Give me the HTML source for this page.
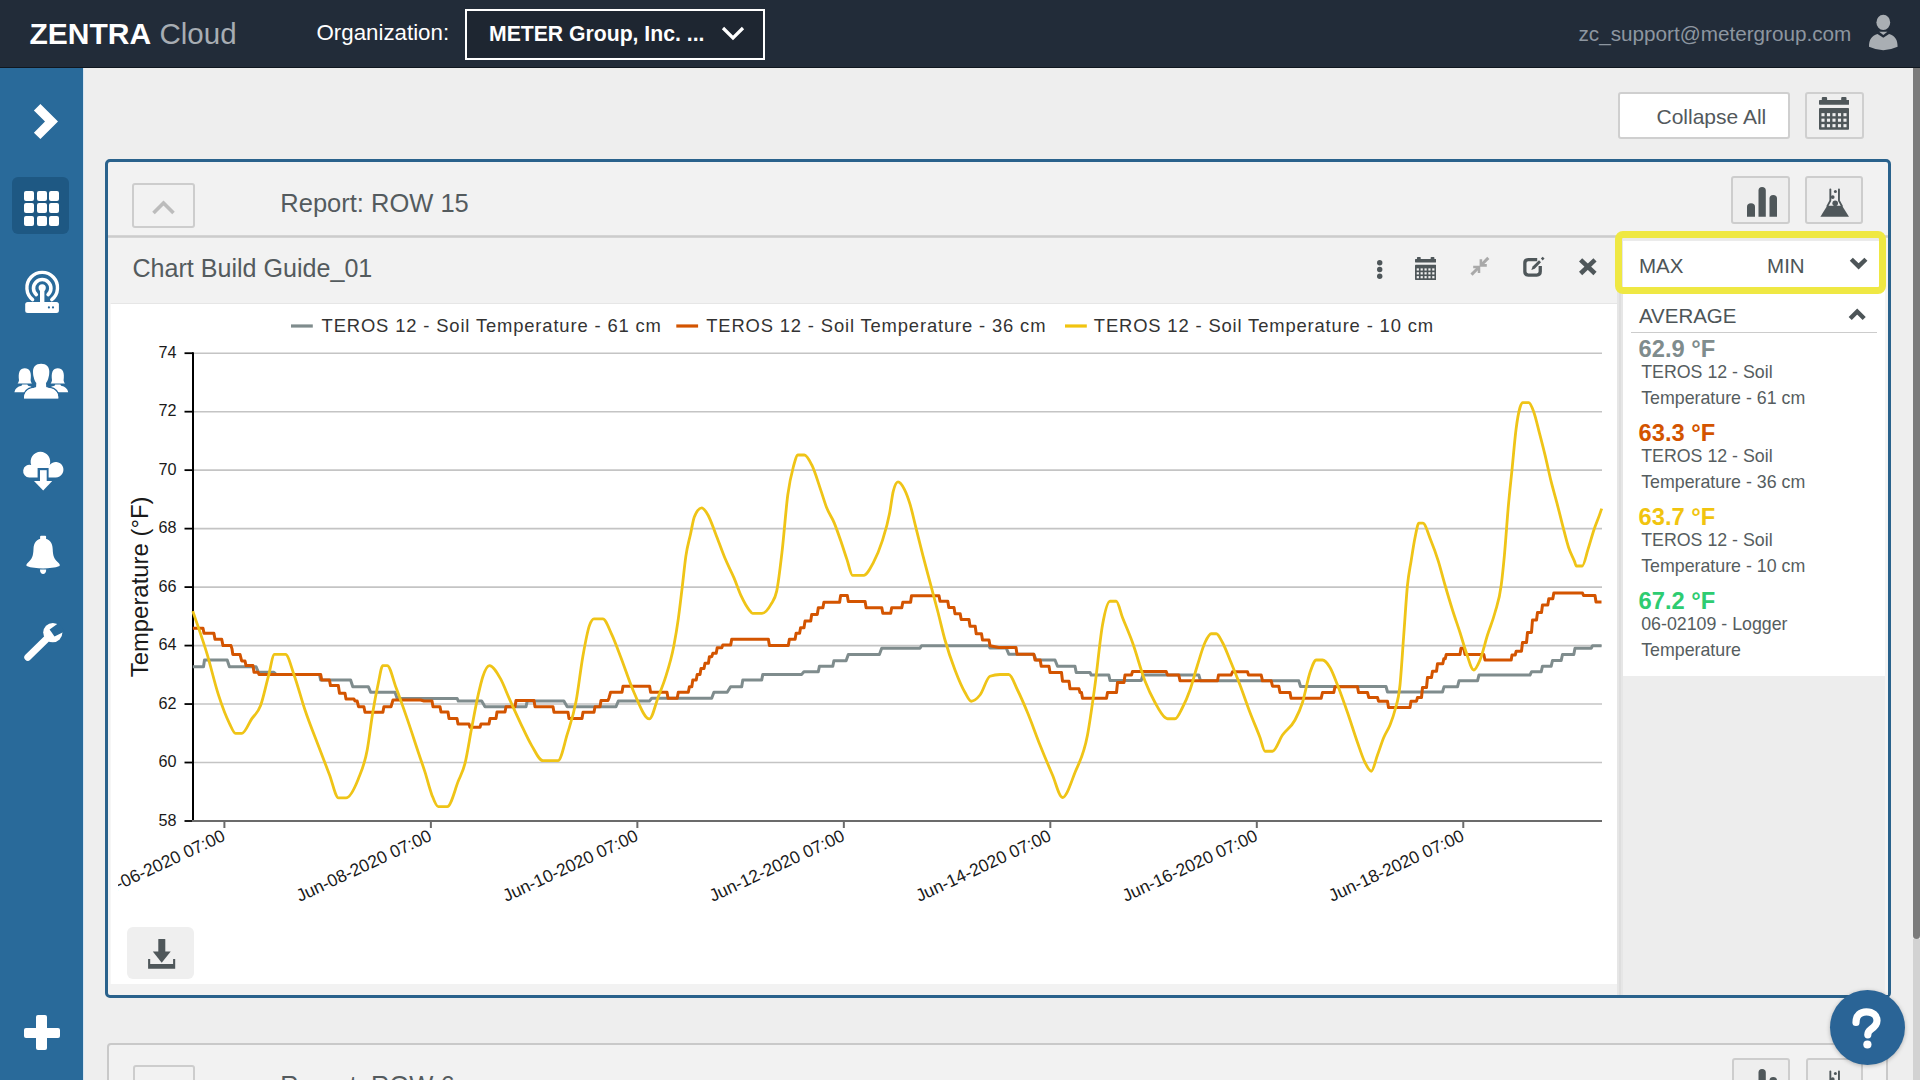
<!DOCTYPE html><html><head><meta charset="utf-8"><style>html,body{margin:0;padding:0;}body{width:1920px;height:1080px;overflow:hidden;position:relative;background:#eeeeee;font-family:"Liberation Sans",sans-serif;}</style></head><body><div style="position:absolute;left:0px;top:0px;width:1920px;height:67px;background:#222c39;"></div>
<div style="position:absolute;left:0px;top:67px;width:1920px;height:1px;background:#10171f;"></div>
<div style="position:absolute;left:29.50px;top:18.50px;font-size:30px;line-height:30px;color:#ffffff;font-weight:bold;white-space:nowrap;">ZENTRA</div>
<div style="position:absolute;left:159.50px;top:18.93px;font-size:29.5px;line-height:29.5px;color:#a7adb3;font-weight:normal;white-space:nowrap;">Cloud</div>
<div style="position:absolute;left:316.50px;top:22.12px;font-size:22.3px;line-height:22.3px;color:#ffffff;font-weight:normal;white-space:nowrap;">Organization:</div>
<div style="position:absolute;left:465px;top:9px;width:300px;height:51px;box-sizing:border-box;border:2px solid #ffffff;background:#1e2631;"></div>
<div style="position:absolute;left:489.00px;top:23.05px;font-size:21.2px;line-height:21.2px;color:#ffffff;font-weight:bold;white-space:nowrap;">METER Group, Inc. ...</div>
<svg style="position:absolute;left:720px;top:25px" width="26" height="17" viewBox="0 0 26 17"><polyline points="3,3 13,13 23,3" fill="none" stroke="#ffffff" stroke-width="3.2"/></svg>
<div style="position:absolute;left:1578.50px;top:24.38px;font-size:20.7px;line-height:20.7px;color:#8d96a0;font-weight:normal;white-space:nowrap;">zc_support@metergroup.com</div>
<svg style="position:absolute;left:1862px;top:10px" width="40" height="46" viewBox="1862 10 40 46"><ellipse cx="1883.3" cy="22.4" rx="6.9" ry="7.6" fill="#a9aeb3"/><path d="M1869,46.8 C1869,39.5 1871.5,36 1877.5,34 L1883.3,37.8 L1889.1,34 C1895.1,36 1897.6,39.5 1897.6,46.8 Q1883.3,53.5 1869,46.8 Z" fill="#a9aeb3"/><polygon points="1879.2,31.8 1887.4,31.8 1883.3,35" fill="#a9aeb3"/></svg>
<div style="position:absolute;left:0px;top:68px;width:83px;height:1012px;background:#296a9a;"></div>
<div style="position:absolute;left:83px;top:68px;width:1px;height:1012px;background:#d6e4f0;"></div>
<svg style="position:absolute;left:28px;top:100px" width="36" height="44" viewBox="28 100 36 44"><polygon points="33.9,110.5 40.4,104 58,121.5 40.4,139 33.9,132.7 45,121.6" fill="#fff"/></svg>
<div style="position:absolute;left:12px;top:177px;width:57px;height:57px;background:#1e5883;border-radius:6px;"></div>
<div style="position:absolute;left:24.0px;top:191.0px;width:10px;height:10px;background:#ffffff;border-radius:2px;"></div>
<div style="position:absolute;left:36.5px;top:191.0px;width:10px;height:10px;background:#ffffff;border-radius:2px;"></div>
<div style="position:absolute;left:49.0px;top:191.0px;width:10px;height:10px;background:#ffffff;border-radius:2px;"></div>
<div style="position:absolute;left:24.0px;top:203.3px;width:10px;height:10px;background:#ffffff;border-radius:2px;"></div>
<div style="position:absolute;left:36.5px;top:203.3px;width:10px;height:10px;background:#ffffff;border-radius:2px;"></div>
<div style="position:absolute;left:49.0px;top:203.3px;width:10px;height:10px;background:#ffffff;border-radius:2px;"></div>
<div style="position:absolute;left:24.0px;top:215.6px;width:10px;height:10px;background:#ffffff;border-radius:2px;"></div>
<div style="position:absolute;left:36.5px;top:215.6px;width:10px;height:10px;background:#ffffff;border-radius:2px;"></div>
<div style="position:absolute;left:49.0px;top:215.6px;width:10px;height:10px;background:#ffffff;border-radius:2px;"></div>
<svg style="position:absolute;left:0px;top:260px" width="84" height="60" viewBox="0 260 84 60"><path d="M32.6,299.6 A15.3,15.3 0 1 1 51.8,299.6" fill="none" stroke="#fff" stroke-width="3.4" stroke-linecap="round"/><path d="M36.3,294.6 A8.7,8.7 0 1 1 48.1,294.6" fill="none" stroke="#fff" stroke-width="3.6" stroke-linecap="round"/><circle cx="42.2" cy="287.8" r="3.6" fill="#fff"/><rect x="40" y="288" width="4.4" height="15" fill="#fff"/><rect x="25.2" y="301.9" width="33.7" height="11.1" rx="2.5" fill="#fff"/><circle cx="48.9" cy="307.4" r="1.1" fill="#2a6a9c"/><circle cx="53" cy="307.4" r="1.1" fill="#2a6a9c"/></svg>
<svg style="position:absolute;left:0px;top:355px" width="84" height="50" viewBox="0 355 84 50"><g transform="translate(0.0 0)"><path d="M19,380.2 C18.6,377 18.5,374 19.5,371.5 C20.5,369 22.5,368.2 24.8,368.2 C27.1,368.2 29.1,369 30.1,371.5 C31.1,374 31,377 30.6,380.2 C30.8,381.8 31.5,382.8 32,383.6 L17.6,383.6 C18.1,382.8 18.8,381.8 19,380.2 Z" fill="#fff"/><path d="M14.4,392.2 C15,388.6 17.5,386.6 21.5,385.8 L22.3,384.6 L27.3,384.6 L28.1,385.8 C32.1,386.6 34.6,388.6 35.2,392.2 Z" fill="#fff"/></g><g transform="translate(33.0 0)"><path d="M19,380.2 C18.6,377 18.5,374 19.5,371.5 C20.5,369 22.5,368.2 24.8,368.2 C27.1,368.2 29.1,369 30.1,371.5 C31.1,374 31,377 30.6,380.2 C30.8,381.8 31.5,382.8 32,383.6 L17.6,383.6 C18.1,382.8 18.8,381.8 19,380.2 Z" fill="#fff"/><path d="M14.4,392.2 C15,388.6 17.5,386.6 21.5,385.8 L22.3,384.6 L27.3,384.6 L28.1,385.8 C32.1,386.6 34.6,388.6 35.2,392.2 Z" fill="#fff"/></g><g fill="#fff" stroke="#2a6a9c" stroke-width="3.4" paint-order="stroke"><path d="M24,398.4 C24.3,392.2 27.5,389 33.5,388.1 L36.5,387.2 L46,387.2 L49,388.1 C55,389 58.3,392.2 58.3,398.4 Z"/></g><path d="M41.1,363.7 C46.5,363.7 49.3,367 49.3,371.5 C49.3,374 49,376 48.5,377.5 C48,380 47,382 46,383 L46.3,388.5 L36,388.5 L36.3,383 C35.3,382 34.3,380 33.8,377.5 C33.3,376 33,374 33,371.5 C33,367 35.7,363.7 41.1,363.7 Z" fill="#fff"/><path d="M24,398.2 C24.3,392.2 27.5,389 33.5,388.1 L36.5,387.2 L46,387.2 L49,388.1 C55,389 58.3,392.2 58.3,398.2 Z" fill="#fff"/></svg>
<svg style="position:absolute;left:0px;top:440px" width="84" height="60" viewBox="0 440 84 60"><path d="M29.3,477.4 A6.3,6.3 0 1 1 31.2,465.05 A9.8,9.8 0 1 1 49.6,465.05 A7.7,7.7 0 1 1 55.7,477.4 Z" fill="#fff"/><rect x="37.6" y="468" width="11" height="14" fill="#2a6a9c"/><rect x="40" y="470.2" width="6.7" height="12" fill="#fff"/><polygon points="34,481 52.2,481 43.2,490.4" fill="#fff"/></svg>
<svg style="position:absolute;left:0px;top:530px" width="84" height="50" viewBox="0 530 84 50"><rect x="40.1" y="535.8" width="6" height="4" rx="1" fill="#fff"/><path d="M43.1,538.6 C36.6,538.6 33.7,543 33.5,549 C33.3,555.5 32.1,559 28.6,562 C26.6,563.8 25.9,565 26.7,566 C31.1,567.8 37.1,568.4 43.1,568.4 C49.1,568.4 55.1,567.8 59.5,566 C60.3,565 59.6,563.8 57.6,562 C54.1,559 52.9,555.5 52.7,549 C52.5,543 49.6,538.6 43.1,538.6 Z" fill="#fff"/><path d="M40,569.6 H46.2 C46.2,572.6 45,574 43.1,574 C41.2,574 40,572.6 40,569.6 Z" fill="#fff"/></svg>
<svg style="position:absolute;left:0px;top:615px" width="84" height="55" viewBox="0 615 84 55"><line x1="27.8" y1="657.2" x2="47.5" y2="638" stroke="#fff" stroke-width="7" stroke-linecap="round"/><circle cx="52.8" cy="632.6" r="9.6" fill="#fff"/><polygon points="49.6,629.6 54.5,636.4 64.5,631.5 59,622.8" fill="#296a9a"/></svg>
<div style="position:absolute;left:23.5px;top:1027.5px;width:36px;height:10.4px;background:#fff;border-radius:2px;"></div>
<div style="position:absolute;left:36.4px;top:1015px;width:10.2px;height:35.2px;background:#fff;border-radius:2px;"></div>
<div style="position:absolute;left:1618px;top:92px;width:172px;height:47px;box-sizing:border-box;border:2px solid #cfcfcf;border-radius:3px;background:#ffffff;"></div>
<div style="position:absolute;left:1656.50px;top:106.02px;font-size:21px;line-height:21px;color:#53595c;font-weight:normal;white-space:nowrap;">Collapse All</div>
<div style="position:absolute;left:1805px;top:92px;width:59px;height:47px;box-sizing:border-box;border:2px solid #cfcfcf;border-radius:3px;background:#efefef;"></div>
<svg style="position:absolute;left:1818.6px;top:97px" width="30.2" height="32.7" viewBox="0 0 30.2 32.7" preserveAspectRatio="none"><rect x="2.8" y="0" width="5.3" height="4.5" rx="1" fill="#4f575a"/><rect x="22.2" y="0" width="5.3" height="4.5" rx="1" fill="#4f575a"/><rect x="0" y="2.9" width="30.2" height="4.8" rx="0.8" fill="#4f575a"/><rect x="0" y="11.1" width="30.2" height="21.6" rx="1" fill="#4f575a"/><rect x="2.45" y="16.15" width="3.1" height="3.1" fill="#efefef"/><rect x="7.95" y="16.15" width="3.1" height="3.1" fill="#efefef"/><rect x="13.45" y="16.15" width="3.1" height="3.1" fill="#efefef"/><rect x="18.95" y="16.15" width="3.1" height="3.1" fill="#efefef"/><rect x="24.45" y="16.15" width="3.1" height="3.1" fill="#efefef"/><rect x="2.45" y="21.65" width="3.1" height="3.1" fill="#efefef"/><rect x="7.95" y="21.65" width="3.1" height="3.1" fill="#efefef"/><rect x="13.45" y="21.65" width="3.1" height="3.1" fill="#efefef"/><rect x="18.95" y="21.65" width="3.1" height="3.1" fill="#efefef"/><rect x="24.45" y="21.65" width="3.1" height="3.1" fill="#efefef"/><rect x="2.45" y="27.15" width="3.1" height="3.1" fill="#efefef"/><rect x="7.95" y="27.15" width="3.1" height="3.1" fill="#efefef"/><rect x="13.45" y="27.15" width="3.1" height="3.1" fill="#efefef"/><rect x="18.95" y="27.15" width="3.1" height="3.1" fill="#efefef"/><rect x="24.45" y="27.15" width="3.1" height="3.1" fill="#efefef"/></svg>
<div style="position:absolute;left:105px;top:159px;width:1786px;height:839px;box-sizing:border-box;border:3px solid #2a628c;border-radius:5px;background:#f2f2f2;"></div>
<div style="position:absolute;left:132px;top:183px;width:63px;height:45px;box-sizing:border-box;border:2px solid #cdcdcd;border-radius:3px;"></div>
<svg style="position:absolute;left:145px;top:195px" width="40" height="26" viewBox="0 0 40 26"><polyline points="8.5,18 18.5,8 28.5,18" fill="none" stroke="#bcbcbc" stroke-width="3.6"/></svg>
<div style="position:absolute;left:280.30px;top:191.21px;font-size:25.5px;line-height:25.5px;color:#545b5e;font-weight:normal;white-space:nowrap;">Report: ROW 15</div>
<div style="position:absolute;left:1731px;top:176px;width:59px;height:48px;box-sizing:border-box;border:2px solid #cdcdcd;border-radius:3px;background:#eeeeee;"></div>
<div style="position:absolute;left:1805px;top:176px;width:58px;height:48px;box-sizing:border-box;border:2px solid #cdcdcd;border-radius:3px;background:#eeeeee;"></div>
<svg style="position:absolute;left:1740px;top:180px" width="45" height="40" viewBox="1740 180 45 40"><path d="M1747,216.7 V207 Q1747,203.3 1751,203.3 Q1755,203.3 1755,207 V216.7 Z" fill="#4f575a"/><path d="M1758.5,216.7 V190.5 Q1758.5,187 1762,187 Q1765.8,187 1765.8,190.5 V216.7 Z" fill="#4f575a"/><path d="M1769.5,216.7 V198.5 Q1769.5,195 1773.2,195 Q1777,195 1777,198.5 V216.7 Z" fill="#4f575a"/></svg>
<svg style="position:absolute;left:1815px;top:183px" width="40" height="38" viewBox="1815 183 40 38"><g transform="translate(0 0)"><rect x="1829.4" y="188.6" width="1.9" height="12.6" rx="0.9" fill="#4f575a"/><rect x="1838" y="188.6" width="1.9" height="12.6" rx="0.9" fill="#4f575a"/><line x1="1830.35" y1="200.6" x2="1827.1" y2="206.6" stroke="#4f575a" stroke-width="1.9"/><line x1="1838.95" y1="200.6" x2="1842.2" y2="206.6" stroke="#4f575a" stroke-width="1.9"/><polygon points="1827.2,205.8 1842.1,205.8 1849,216.8 1820.4,216.8" fill="#4f575a"/><circle cx="1835.2" cy="203.3" r="2.8" fill="#4f575a"/><circle cx="1832.7" cy="197.1" r="1.9" fill="#4f575a"/><circle cx="1835.4" cy="191.4" r="1.5" fill="#4f575a"/></g></svg>
<div style="position:absolute;left:108px;top:235px;width:1780px;height:3px;background:#d4d4d4;"></div>
<div style="position:absolute;left:108px;top:235.5px;width:1780px;height:1.5px;background:#cccccc;"></div>
<div style="position:absolute;left:132.40px;top:255.75px;font-size:25.1px;line-height:25.1px;color:#545b5e;font-weight:normal;white-space:nowrap;">Chart Build Guide_01</div>
<svg style="position:absolute;left:1370px;top:252px" width="20" height="34" viewBox="1370 252 20 34"><circle cx="1379.7" cy="262.7" r="2.7" fill="#4f575a"/><circle cx="1379.7" cy="269.5" r="2.7" fill="#4f575a"/><circle cx="1379.7" cy="276.3" r="2.7" fill="#4f575a"/></svg>
<svg style="position:absolute;left:1415px;top:256.8px" width="21.3" height="23" viewBox="0 0 30.2 32.7" preserveAspectRatio="none"><rect x="2.8" y="0" width="5.3" height="4.5" rx="1" fill="#4f575a"/><rect x="22.2" y="0" width="5.3" height="4.5" rx="1" fill="#4f575a"/><rect x="0" y="2.9" width="30.2" height="4.8" rx="0.8" fill="#4f575a"/><rect x="0" y="11.1" width="30.2" height="21.6" rx="1" fill="#4f575a"/><rect x="2.45" y="16.15" width="3.1" height="3.1" fill="#f2f2f2"/><rect x="7.95" y="16.15" width="3.1" height="3.1" fill="#f2f2f2"/><rect x="13.45" y="16.15" width="3.1" height="3.1" fill="#f2f2f2"/><rect x="18.95" y="16.15" width="3.1" height="3.1" fill="#f2f2f2"/><rect x="24.45" y="16.15" width="3.1" height="3.1" fill="#f2f2f2"/><rect x="2.45" y="21.65" width="3.1" height="3.1" fill="#f2f2f2"/><rect x="7.95" y="21.65" width="3.1" height="3.1" fill="#f2f2f2"/><rect x="13.45" y="21.65" width="3.1" height="3.1" fill="#f2f2f2"/><rect x="18.95" y="21.65" width="3.1" height="3.1" fill="#f2f2f2"/><rect x="24.45" y="21.65" width="3.1" height="3.1" fill="#f2f2f2"/><rect x="2.45" y="27.15" width="3.1" height="3.1" fill="#f2f2f2"/><rect x="7.95" y="27.15" width="3.1" height="3.1" fill="#f2f2f2"/><rect x="13.45" y="27.15" width="3.1" height="3.1" fill="#f2f2f2"/><rect x="18.95" y="27.15" width="3.1" height="3.1" fill="#f2f2f2"/><rect x="24.45" y="27.15" width="3.1" height="3.1" fill="#f2f2f2"/></svg>
<svg style="position:absolute;left:1466px;top:253px" width="26" height="26" viewBox="1466 253 26 26"><g fill="none" stroke="#a9a9a9" stroke-linejoin="miter" stroke-linecap="butt"><polyline points="1480.9,259.3 1480.9,265.35 1486.8,265.35" stroke-width="2.6"/><line x1="1482" y1="264.2" x2="1488.3" y2="257.9" stroke-width="3"/><polyline points="1473.2,267.1 1479,267.1 1479,273" stroke-width="2.5"/><line x1="1477.9" y1="268.2" x2="1471.5" y2="274.6" stroke-width="3"/></g></svg>
<svg style="position:absolute;left:1518px;top:252px" width="32" height="30" viewBox="1518 252 32 30"><path d="M1537.2,259.65 H1528.3 Q1524.85,259.65 1524.85,263.1 V271.6 Q1524.85,275.05 1528.3,275.05 H1536.8 Q1540.25,275.05 1540.25,271.6 V266" fill="none" stroke="#4f575a" stroke-width="3.3"/><polygon points="1531.3,270.1 1532.6,266.6 1539,260.3 1541,262.3 1534.7,268.7" fill="#4f575a"/><rect x="1541.4" y="257.3" width="2.6" height="2.6" transform="rotate(45 1542.7 258.6)" fill="#4f575a"/></svg>
<svg style="position:absolute;left:1575px;top:254px" width="26" height="26" viewBox="1575 254 26 26"><line x1="1580.6" y1="259.8" x2="1595" y2="273.5" stroke="#4f575a" stroke-width="4.6"/><line x1="1595" y1="259.8" x2="1580.6" y2="273.5" stroke="#4f575a" stroke-width="4.6"/></svg>
<svg style="position:absolute;left:0;top:0" width="1920" height="1080" viewBox="0 0 1920 1080"><defs><clipPath id="cc"><rect x="118" y="304" width="1499" height="680"/></clipPath></defs><rect x="110.7" y="304" width="1506.5" height="680" fill="#ffffff"/><line x1="110.7" y1="303.5" x2="1617" y2="303.5" stroke="#e6e6e6" stroke-width="1"/><line x1="184.5" y1="821.00" x2="193" y2="821.00" stroke="#000" stroke-width="1.8"/><text x="176.6" y="825.80" text-anchor="end" font-family="Liberation Sans" font-size="16.2" fill="#1a1a1a">58</text><line x1="194" y1="762.52" x2="1602" y2="762.52" stroke="#c4c4c4" stroke-width="1.6"/><line x1="184.5" y1="762.52" x2="193" y2="762.52" stroke="#000" stroke-width="1.8"/><text x="176.6" y="767.32" text-anchor="end" font-family="Liberation Sans" font-size="16.2" fill="#1a1a1a">60</text><line x1="194" y1="704.05" x2="1602" y2="704.05" stroke="#c4c4c4" stroke-width="1.6"/><line x1="184.5" y1="704.05" x2="193" y2="704.05" stroke="#000" stroke-width="1.8"/><text x="176.6" y="708.85" text-anchor="end" font-family="Liberation Sans" font-size="16.2" fill="#1a1a1a">62</text><line x1="194" y1="645.58" x2="1602" y2="645.58" stroke="#c4c4c4" stroke-width="1.6"/><line x1="184.5" y1="645.58" x2="193" y2="645.58" stroke="#000" stroke-width="1.8"/><text x="176.6" y="650.38" text-anchor="end" font-family="Liberation Sans" font-size="16.2" fill="#1a1a1a">64</text><line x1="194" y1="587.10" x2="1602" y2="587.10" stroke="#c4c4c4" stroke-width="1.6"/><line x1="184.5" y1="587.10" x2="193" y2="587.10" stroke="#000" stroke-width="1.8"/><text x="176.6" y="591.90" text-anchor="end" font-family="Liberation Sans" font-size="16.2" fill="#1a1a1a">66</text><line x1="194" y1="528.62" x2="1602" y2="528.62" stroke="#c4c4c4" stroke-width="1.6"/><line x1="184.5" y1="528.62" x2="193" y2="528.62" stroke="#000" stroke-width="1.8"/><text x="176.6" y="533.42" text-anchor="end" font-family="Liberation Sans" font-size="16.2" fill="#1a1a1a">68</text><line x1="194" y1="470.15" x2="1602" y2="470.15" stroke="#c4c4c4" stroke-width="1.6"/><line x1="184.5" y1="470.15" x2="193" y2="470.15" stroke="#000" stroke-width="1.8"/><text x="176.6" y="474.95" text-anchor="end" font-family="Liberation Sans" font-size="16.2" fill="#1a1a1a">70</text><line x1="194" y1="411.68" x2="1602" y2="411.68" stroke="#c4c4c4" stroke-width="1.6"/><line x1="184.5" y1="411.68" x2="193" y2="411.68" stroke="#000" stroke-width="1.8"/><text x="176.6" y="416.48" text-anchor="end" font-family="Liberation Sans" font-size="16.2" fill="#1a1a1a">72</text><line x1="194" y1="353.20" x2="1602" y2="353.20" stroke="#c4c4c4" stroke-width="1.6"/><line x1="184.5" y1="353.20" x2="193" y2="353.20" stroke="#000" stroke-width="1.8"/><text x="176.6" y="358.00" text-anchor="end" font-family="Liberation Sans" font-size="16.2" fill="#1a1a1a">74</text><line x1="193" y1="352.3" x2="193" y2="822" stroke="#000" stroke-width="2"/><line x1="192" y1="821" x2="1602" y2="821" stroke="#6b6b6b" stroke-width="2"/><g clip-path="url(#cc)"><line x1="224.40" y1="822" x2="224.40" y2="828" stroke="#6b6b6b" stroke-width="2"/><text x="226.40" y="840.00" text-anchor="end" transform="rotate(-25 226.40 840.00)" font-family="Liberation Sans" font-size="17.5" fill="#1a1a1a">Jun-06-2020 07:00</text><line x1="430.88" y1="822" x2="430.88" y2="828" stroke="#6b6b6b" stroke-width="2"/><text x="432.88" y="840.00" text-anchor="end" transform="rotate(-25 432.88 840.00)" font-family="Liberation Sans" font-size="17.5" fill="#1a1a1a">Jun-08-2020 07:00</text><line x1="637.36" y1="822" x2="637.36" y2="828" stroke="#6b6b6b" stroke-width="2"/><text x="639.36" y="840.00" text-anchor="end" transform="rotate(-25 639.36 840.00)" font-family="Liberation Sans" font-size="17.5" fill="#1a1a1a">Jun-10-2020 07:00</text><line x1="843.84" y1="822" x2="843.84" y2="828" stroke="#6b6b6b" stroke-width="2"/><text x="845.84" y="840.00" text-anchor="end" transform="rotate(-25 845.84 840.00)" font-family="Liberation Sans" font-size="17.5" fill="#1a1a1a">Jun-12-2020 07:00</text><line x1="1050.32" y1="822" x2="1050.32" y2="828" stroke="#6b6b6b" stroke-width="2"/><text x="1052.32" y="840.00" text-anchor="end" transform="rotate(-25 1052.32 840.00)" font-family="Liberation Sans" font-size="17.5" fill="#1a1a1a">Jun-14-2020 07:00</text><line x1="1256.80" y1="822" x2="1256.80" y2="828" stroke="#6b6b6b" stroke-width="2"/><text x="1258.80" y="840.00" text-anchor="end" transform="rotate(-25 1258.80 840.00)" font-family="Liberation Sans" font-size="17.5" fill="#1a1a1a">Jun-16-2020 07:00</text><line x1="1463.28" y1="822" x2="1463.28" y2="828" stroke="#6b6b6b" stroke-width="2"/><text x="1465.28" y="840.00" text-anchor="end" transform="rotate(-25 1465.28 840.00)" font-family="Liberation Sans" font-size="17.5" fill="#1a1a1a">Jun-18-2020 07:00</text></g><text x="147.7" y="586.9" text-anchor="middle" transform="rotate(-90 147.7 586.9)" font-family="Liberation Sans" font-size="23.9" fill="#1a1a1a">Temperature (°F)</text><line x1="291" y1="326" x2="312.8" y2="326" stroke="#7f8c8d" stroke-width="3.2"/><text x="321.6" y="331.9" font-family="Liberation Sans" font-size="18.4" letter-spacing="0.85" fill="#333333">TEROS 12 - Soil Temperature - 61 cm</text><line x1="676.3" y1="326" x2="698.0999999999999" y2="326" stroke="#d35400" stroke-width="3.2"/><text x="706.2" y="331.9" font-family="Liberation Sans" font-size="18.4" letter-spacing="0.85" fill="#333333">TEROS 12 - Soil Temperature - 36 cm</text><line x1="1065" y1="326" x2="1086.8" y2="326" stroke="#f1c40f" stroke-width="3.2"/><text x="1093.8" y="331.9" font-family="Liberation Sans" font-size="18.4" letter-spacing="0.85" fill="#333333">TEROS 12 - Soil Temperature - 10 cm</text><polyline points="192.8,666.7 203.5,666.7 204.5,660.0 227.2,660.0 229.4,666.7 256.0,666.7 258.3,672.2 273.9,672.2 276.0,674.4 319.5,674.4 320.6,680.0 350.6,680.0 352.8,686.7 368.3,686.7 370.6,692.2 395.0,692.2 397.2,698.5 457.2,698.5 458.3,701.1 481.7,701.1 485.0,706.7 526.0,706.7 527.2,701.1 563.9,701.1 567.2,706.7 616.0,706.7 618.3,701.1 649.4,701.1 651.7,698.2 711.7,698.2 713.9,692.2 727.2,692.2 730.6,686.7 741.7,686.7 742.8,680.0 761.7,680.0 762.8,674.4 801.7,674.4 803.9,671.8 818.3,671.8 819.4,666.2 832.8,666.2 833.9,660.7 846.1,660.7 848.3,654.4 879.4,654.4 881.7,648.2 920.0,648.2 921.5,645.8 988.8,645.8 990.0,648.0 1006.2,648.0 1008.8,654.2 1033.8,654.2 1036.2,660.0 1055.0,660.0 1057.5,666.2 1075.0,666.2 1076.2,672.5 1090.0,672.5 1091.2,675.0 1108.8,675.0 1110.0,680.5 1141.2,680.5 1143.0,675.0 1198.8,675.0 1200.5,680.8 1298.8,680.8 1300.5,686.5 1386.0,686.5 1387.5,692.0 1442.5,692.0 1444.0,686.8 1457.5,686.8 1459.0,680.8 1477.5,680.8 1479.0,675.0 1530.0,675.0 1531.5,671.8 1541.2,671.8 1542.5,666.2 1551.2,666.2 1552.5,660.5 1561.2,660.5 1562.5,654.5 1573.8,654.5 1575.0,648.2 1591.2,648.2 1592.5,645.8 1601.5,645.8" fill="none" stroke="#7f8c8d" stroke-width="3" stroke-linejoin="round"/><polyline points="192.8,628.2 203.0,628.2 204.0,633.3 213.9,633.3 215.0,639.3 221.7,639.3 223.0,645.6 231.0,645.6 232.0,648.9 232.8,654.4 240.0,654.4 241.7,661.0 245.0,661.0 246.0,665.6 251.7,665.6 253.0,665.6 254.0,672.2 258.0,672.2 259.0,674.4 319.4,674.4 320.7,674.4 321.7,680.0 329.4,680.0 330.5,685.6 338.3,685.6 339.5,693.3 345.0,693.3 346.0,698.9 353.9,698.9 355.0,701.1 357.2,701.1 358.5,706.7 363.9,706.7 365.0,712.2 381.7,712.2 382.9,712.2 383.9,706.7 391.0,706.7 393.0,700.0 420.6,700.0 424.0,701.0 432.0,701.0 433.0,706.7 440.0,706.7 441.0,712.0 448.0,712.0 449.0,718.4 457.0,718.4 458.0,724.0 469.0,724.0 470.0,727.3 480.0,727.3 481.0,724.0 489.0,724.0 490.0,718.4 496.0,718.4 497.0,712.0 505.0,712.0 506.0,706.7 515.0,706.7 516.0,700.4 534.0,700.4 535.0,706.7 553.0,706.7 554.0,712.2 568.0,712.2 569.0,718.4 582.0,718.4 583.0,712.2 594.0,712.2 595.0,706.7 600.0,706.7 601.0,700.4 608.0,700.4 609.0,698.0 610.6,692.2 622.0,692.2 623.0,686.2 647.0,686.2 649.6,686.2 650.6,692.2 667.0,692.2 668.0,698.2 677.2,698.2 678.3,692.2 688.3,692.2 689.4,686.7 691.8,686.7 692.8,680.0 696.2,680.0 697.2,674.4 700.0,674.4 701.0,668.5 704.0,668.5 705.0,663.3 708.4,663.3 709.4,656.7 711.8,656.7 712.8,653.3 716.2,653.3 717.2,647.8 721.8,647.8 722.8,645.1 729.4,645.1 730.7,645.1 731.7,639.3 766.1,639.3 768.4,639.3 769.4,645.6 788.3,645.6 789.4,639.3 795.1,639.3 796.1,633.3 799.6,633.3 800.6,627.8 804.0,627.8 805.0,621.1 810.7,621.1 811.7,614.4 817.3,614.4 818.3,607.8 822.9,607.8 823.9,602.2 838.3,602.2 839.6,602.2 840.6,595.6 846.1,595.6 847.3,595.6 848.3,601.6 863.9,601.6 865.1,601.6 866.1,607.8 880.6,607.8 881.8,607.8 882.8,613.3 889.4,613.3 890.7,613.3 891.7,607.8 899.4,607.8 901.8,607.8 902.8,602.2 910.6,602.2 911.5,595.8 937.5,595.8 939.0,595.8 940.0,601.2 947.8,601.2 948.8,607.5 954.0,607.5 955.0,613.8 960.2,613.8 961.2,619.5 969.0,619.5 970.0,626.2 975.2,626.2 976.2,633.8 981.5,633.8 982.5,640.0 989.0,640.0 990.0,645.8 998.8,647.5 1016.0,647.5 1017.0,654.2 1033.8,654.2 1035.0,660.0 1040.2,660.0 1041.2,666.2 1049.0,666.2 1050.0,672.5 1061.5,672.5 1062.5,681.2 1069.0,681.2 1070.0,688.8 1079.0,688.8 1080.0,692.5 1081.5,692.5 1082.5,698.2 1097.5,698.2 1106.5,698.2 1107.5,692.5 1116.5,692.5 1117.5,682.5 1124.0,682.5 1125.0,675.0 1131.5,675.0 1132.5,671.5 1166.2,671.5 1167.5,675.0 1178.8,675.0 1180.0,680.8 1217.5,680.8 1218.5,675.0 1231.2,675.0 1232.5,671.8 1247.5,671.8 1248.5,675.0 1261.2,675.0 1262.5,680.8 1271.2,680.8 1272.5,686.2 1278.8,686.2 1280.0,692.5 1290.0,692.5 1291.0,698.2 1321.2,698.2 1322.5,692.5 1333.8,692.5 1335.0,686.8 1357.5,686.8 1358.5,692.5 1367.5,692.5 1368.8,697.5 1377.5,697.5 1378.5,701.2 1387.5,701.2 1388.5,707.5 1410.0,707.5 1411.0,701.2 1416.5,701.2 1417.5,697.5 1421.5,697.5 1422.5,687.5 1426.5,687.5 1427.5,677.5 1431.5,677.5 1432.5,671.2 1436.5,671.2 1437.5,663.8 1442.8,663.8 1443.8,658.8 1445.2,658.8 1446.2,654.5 1460.0,654.5 1461.0,648.2 1463.8,648.2 1465.0,654.5 1483.8,654.5 1485.0,660.0 1511.2,660.0 1512.0,655.0 1515.2,655.0 1516.2,651.2 1521.5,651.2 1522.5,642.5 1526.5,642.5 1527.5,632.5 1531.5,632.5 1532.5,620.0 1536.5,620.0 1537.5,612.5 1541.5,612.5 1542.5,605.0 1547.8,605.0 1548.8,598.8 1552.8,598.8 1553.8,593.0 1582.5,593.0 1583.5,595.5 1595.0,595.5 1596.0,602.0 1601.5,602.0" fill="none" stroke="#d35400" stroke-width="3" stroke-linejoin="round"/><path d="M192.80,611.10 C197.60,625.53 202.40,638.35 207.20,654.40 C210.90,666.77 214.60,682.92 218.30,694.40 C222.00,705.88 225.70,715.97 229.40,723.30 C231.43,727.33 233.47,733.30 235.50,733.30 C237.67,733.30 239.83,733.30 242.00,733.30 C245.23,733.30 248.47,723.72 251.70,718.90 C254.67,714.48 257.63,713.63 260.60,705.60 C263.17,698.66 265.73,686.11 268.30,676.70 C270.37,669.12 272.43,654.40 274.50,654.40 C278.17,654.40 281.83,654.40 285.50,654.40 C288.30,654.40 291.10,666.74 293.90,674.40 C297.60,684.53 301.30,699.03 305.00,710.00 C309.43,723.15 313.87,733.93 318.30,745.60 C322.00,755.34 325.70,764.85 329.40,774.40 C332.43,782.23 335.47,797.80 338.50,797.80 C341.00,797.80 343.50,797.80 346.00,797.80 C350.10,797.80 354.20,789.27 358.30,778.90 C361.27,771.40 364.23,766.01 367.20,750.00 C369.07,739.93 370.93,723.39 372.80,712.20 C374.63,701.21 376.47,691.60 378.30,683.30 C379.80,676.51 381.30,665.60 382.80,665.60 C384.27,665.60 385.73,665.60 387.20,665.60 C390.17,665.60 393.13,679.99 396.10,687.80 C399.80,697.54 403.50,708.17 407.20,718.90 C410.90,729.63 414.60,741.13 418.30,752.20 C420.53,758.88 422.77,765.17 425.00,772.20 C427.23,779.23 429.47,788.63 431.70,794.40 C433.90,800.08 436.10,806.70 438.30,806.70 C441.27,806.70 444.23,806.70 447.20,806.70 C450.90,806.70 454.60,790.44 458.30,781.10 C460.53,775.46 462.77,772.18 465.00,763.30 C467.23,754.42 469.47,739.37 471.70,727.80 C473.90,716.41 476.10,704.06 478.30,694.40 C479.80,687.81 481.30,681.23 482.80,676.70 C485.00,670.05 487.20,665.60 489.40,665.60 C493.13,665.60 496.87,672.20 500.60,678.90 C503.53,684.17 506.47,692.35 509.40,698.90 C513.13,707.23 516.87,715.48 520.60,723.30 C524.30,731.05 528.00,739.40 531.70,745.60 C535.47,751.91 539.23,760.70 543.00,760.70 C548.00,760.70 553.00,760.70 558.00,760.70 C561.07,760.70 564.13,744.54 567.20,734.40 C570.17,724.59 573.13,717.08 576.10,701.10 C578.33,689.07 580.57,669.35 582.80,656.70 C585.00,644.24 587.20,631.75 589.40,625.60 C590.93,621.32 592.47,618.90 594.00,618.90 C596.93,618.90 599.87,618.90 602.80,618.90 C605.77,618.90 608.73,628.10 611.70,634.40 C614.67,640.70 617.63,649.07 620.60,656.70 C625.03,668.10 629.47,682.30 633.90,692.20 C639.07,703.73 644.23,718.90 649.40,718.90 C652.37,718.90 655.33,704.37 658.30,696.70 C660.53,690.92 662.77,685.87 665.00,678.90 C667.97,669.64 670.93,661.32 673.90,645.60 C675.37,637.83 676.83,629.36 678.30,618.90 C679.60,609.63 680.90,598.19 682.20,587.40 C683.43,577.16 684.67,564.34 685.90,555.90 C687.47,545.18 689.03,540.92 690.60,533.70 C691.83,528.02 693.07,520.07 694.30,517.00 C696.77,510.87 699.23,507.80 701.70,507.80 C703.83,507.80 705.97,511.45 708.10,515.20 C710.60,519.60 713.10,527.36 715.60,533.70 C718.67,541.48 721.73,550.43 724.80,557.80 C727.90,565.25 731.00,570.76 734.10,578.10 C736.57,583.94 739.03,591.45 741.50,596.70 C743.97,601.95 746.43,606.52 748.90,609.60 C750.13,611.14 751.37,613.30 752.60,613.30 C755.70,613.30 758.80,613.30 761.90,613.30 C764.97,613.30 768.03,609.69 771.10,604.10 C772.97,600.70 774.83,599.77 776.70,591.10 C778.53,582.59 780.37,566.26 782.20,550.40 C784.07,534.25 785.93,508.74 787.80,494.80 C789.63,481.11 791.47,473.79 793.30,467.00 C794.87,461.19 796.43,455.00 798.00,455.00 C800.13,455.00 802.27,455.00 804.40,455.00 C806.90,455.00 809.40,460.17 811.90,465.20 C814.97,471.37 818.03,482.15 821.10,491.10 C822.97,496.55 824.83,503.02 826.70,507.80 C829.17,514.11 831.63,516.73 834.10,522.60 C836.57,528.47 839.03,535.83 841.50,543.00 C843.33,548.33 845.17,554.25 847.00,559.60 C848.87,565.05 850.73,575.40 852.60,575.40 C856.30,575.40 860.00,575.40 863.70,575.40 C866.80,575.40 869.90,569.07 873.00,563.30 C876.07,557.60 879.13,550.78 882.20,541.10 C884.67,533.31 887.13,526.26 889.60,513.30 C890.83,506.82 892.07,495.93 893.30,491.10 C894.87,484.97 896.43,481.90 898.00,481.90 C900.13,481.90 902.27,485.14 904.40,489.30 C906.27,492.94 908.13,497.93 910.00,504.10 C911.87,510.27 913.73,518.87 915.60,526.30 C918.07,536.12 920.53,546.33 923.00,555.90 C925.47,565.47 927.93,574.43 930.40,583.70 C932.87,592.97 935.33,601.98 937.80,611.50 C940.20,620.76 942.60,631.46 945.00,640.00 C948.33,651.86 951.67,661.25 955.00,670.00 C958.33,678.75 961.67,686.74 965.00,692.50 C967.08,696.10 969.17,701.25 971.25,701.25 C974.17,701.25 977.08,698.66 980.00,695.00 C983.33,690.81 986.67,677.42 990.00,676.25 C993.33,675.08 996.67,674.50 1000.00,674.50 C1002.92,674.50 1005.83,674.50 1008.75,674.50 C1011.67,674.50 1014.58,684.18 1017.50,690.00 C1020.83,696.65 1024.17,704.48 1027.50,712.50 C1031.67,722.52 1035.83,734.58 1040.00,745.00 C1044.17,755.42 1048.33,765.35 1052.50,775.00 C1055.83,782.72 1059.17,797.50 1062.50,797.50 C1066.67,797.50 1070.83,782.92 1075.00,772.50 C1079.17,762.08 1083.33,757.05 1087.50,735.00 C1090.00,721.77 1092.50,703.33 1095.00,685.00 C1097.50,666.67 1100.00,638.96 1102.50,625.00 C1105.00,611.04 1107.50,601.25 1110.00,601.25 C1112.08,601.25 1114.17,601.25 1116.25,601.25 C1118.33,601.25 1120.42,612.16 1122.50,617.50 C1125.83,626.04 1129.17,633.31 1132.50,642.50 C1136.67,653.99 1140.83,670.32 1145.00,681.00 C1148.33,689.54 1151.67,696.42 1155.00,702.50 C1158.33,708.58 1161.67,715.17 1165.00,717.50 C1165.83,718.08 1166.67,718.75 1167.50,718.75 C1170.00,718.75 1172.50,718.75 1175.00,718.75 C1177.50,718.75 1180.00,712.29 1182.50,707.50 C1185.00,702.71 1187.50,697.08 1190.00,690.00 C1192.50,682.92 1195.00,672.92 1197.50,665.00 C1200.00,657.08 1202.50,647.82 1205.00,642.50 C1207.08,638.07 1209.17,633.75 1211.25,633.75 C1212.92,633.75 1214.58,633.75 1216.25,633.75 C1218.33,633.75 1220.42,638.70 1222.50,642.50 C1225.00,647.06 1227.50,653.99 1230.00,660.00 C1233.33,668.02 1236.67,676.25 1240.00,685.00 C1243.33,693.75 1246.67,703.75 1250.00,712.50 C1253.33,721.25 1256.67,728.61 1260.00,737.50 C1261.67,741.94 1263.33,751.25 1265.00,751.25 C1267.50,751.25 1270.00,751.25 1272.50,751.25 C1275.83,751.25 1279.17,739.79 1282.50,735.00 C1286.67,729.02 1290.83,727.95 1295.00,720.00 C1297.50,715.23 1300.00,710.42 1302.50,702.50 C1305.00,694.58 1307.50,679.77 1310.00,672.50 C1312.08,666.44 1314.17,660.00 1316.25,660.00 C1318.33,660.00 1320.42,660.00 1322.50,660.00 C1325.00,660.00 1327.50,663.33 1330.00,667.50 C1332.50,671.67 1335.00,678.72 1337.50,685.00 C1340.83,693.37 1344.17,702.92 1347.50,712.50 C1350.83,722.08 1354.17,733.13 1357.50,742.50 C1360.00,749.52 1362.50,757.56 1365.00,762.50 C1367.08,766.62 1369.17,771.25 1371.25,771.25 C1373.33,771.25 1375.42,760.62 1377.50,755.00 C1379.58,749.38 1381.67,742.50 1383.75,737.50 C1385.83,732.50 1387.92,730.32 1390.00,725.00 C1391.67,720.74 1393.33,716.67 1395.00,710.00 C1396.67,703.33 1398.33,701.27 1400.00,685.00 C1401.25,672.80 1402.50,651.67 1403.75,635.00 C1405.00,618.33 1406.25,597.40 1407.50,585.00 C1408.70,573.10 1409.90,568.68 1411.10,561.10 C1412.40,552.88 1413.70,544.12 1415.00,537.80 C1416.30,531.48 1417.60,523.20 1418.90,523.20 C1420.20,523.20 1421.50,523.20 1422.80,523.20 C1425.40,523.20 1428.00,533.33 1430.60,539.70 C1433.17,545.99 1435.73,552.89 1438.30,561.10 C1440.53,568.25 1442.77,577.28 1445.00,585.00 C1447.50,593.64 1450.00,602.08 1452.50,610.00 C1455.00,617.92 1457.50,624.73 1460.00,632.50 C1462.08,638.98 1464.17,646.65 1466.25,652.50 C1468.75,659.52 1471.25,670.00 1473.75,670.00 C1475.83,670.00 1477.92,664.97 1480.00,660.00 C1482.50,654.03 1485.00,642.92 1487.50,635.00 C1490.00,627.08 1492.50,621.91 1495.00,612.50 C1497.08,604.66 1499.17,601.13 1501.25,585.00 C1502.30,576.87 1503.35,566.62 1504.40,555.30 C1505.70,541.28 1507.00,521.28 1508.30,506.70 C1509.60,492.12 1510.90,480.77 1512.20,467.80 C1513.50,454.83 1514.80,438.95 1516.10,428.90 C1517.40,418.85 1518.70,411.80 1520.00,407.50 C1520.97,404.30 1521.93,402.60 1522.90,402.60 C1524.83,402.60 1526.77,402.60 1528.70,402.60 C1530.33,402.60 1531.97,407.05 1533.60,411.40 C1535.53,416.55 1537.47,425.42 1539.40,432.80 C1541.37,440.31 1543.33,447.92 1545.30,456.10 C1547.23,464.14 1549.17,473.62 1551.10,481.40 C1553.03,489.18 1554.97,495.42 1556.90,502.80 C1558.87,510.31 1560.83,518.59 1562.80,526.10 C1564.73,533.48 1566.67,541.67 1568.60,547.50 C1570.53,553.33 1572.47,556.42 1574.40,561.10 C1575.07,562.72 1575.73,566.00 1576.40,566.00 C1578.33,566.00 1580.27,566.00 1582.20,566.00 C1584.13,566.00 1586.07,555.34 1588.00,549.40 C1589.97,543.36 1591.93,535.87 1593.90,530.00 C1595.83,524.23 1597.77,519.90 1599.70,514.40 C1600.37,512.50 1601.03,510.53 1601.70,508.60" fill="none" stroke="#efc417" stroke-width="2.8" stroke-linejoin="round"/></svg>
<div style="position:absolute;left:126.5px;top:927.3px;width:67.5px;height:52px;background:#efefef;border-radius:6px;"></div>
<svg style="position:absolute;left:140px;top:935px" width="44" height="40" viewBox="140 935 44 40"><rect x="158.3" y="939" width="7" height="13.5" rx="0.6" fill="#4f575a"/><polygon points="152.8,951.4 170.7,951.4 161.7,962.8" fill="#4f575a"/><path d="M148.1,959 H150.2 V963.9 H173.1 V959 H175.2 V968.8 H148.1 Z" fill="#4f575a"/></svg>
<div style="position:absolute;left:1623px;top:676px;width:261.5px;height:319px;background:#ededed;"></div>
<div style="position:absolute;left:1617px;top:238px;width:6px;height:757px;background:#e6e6e6;"></div>
<div style="position:absolute;left:1618.8px;top:238px;width:2.6px;height:757px;background:#dedede;"></div>
<div style="position:absolute;left:1622.5px;top:238px;width:262px;height:438px;background:#ffffff;"></div>
<div style="position:absolute;left:1622.5px;top:238px;width:262px;height:3px;background:#ebebeb;"></div>
<div style="position:absolute;left:1884.5px;top:238px;width:3.5px;height:757px;background:#f4f4f4;"></div>
<div style="position:absolute;left:1615px;top:231px;width:270.5px;height:62.5px;box-sizing:border-box;border:7px solid #efe843;border-radius:8px;"></div>
<div style="position:absolute;left:1638.90px;top:255.55px;font-size:20.5px;line-height:20.5px;color:#4d5558;font-weight:normal;white-space:nowrap;">MAX</div>
<div style="position:absolute;left:1767.10px;top:255.55px;font-size:20.5px;line-height:20.5px;color:#4d5558;font-weight:normal;white-space:nowrap;">MIN</div>
<svg style="position:absolute;left:1845px;top:252px" width="28" height="22" viewBox="1845 252 28 22"><polyline points="1851.3,259.2 1858.6,266.4 1865.9,259.2" fill="none" stroke="#4d5558" stroke-width="4.4"/></svg>
<div style="position:absolute;left:1638.90px;top:306.05px;font-size:20.5px;line-height:20.5px;color:#4d5558;font-weight:normal;white-space:nowrap;">AVERAGE</div>
<svg style="position:absolute;left:1845px;top:302px" width="28" height="24" viewBox="1845 302 28 24"><polyline points="1850.2,318.5 1857.2,311.5 1864.2,318.5" fill="none" stroke="#4d5558" stroke-width="4.4"/></svg>
<div style="position:absolute;left:1631px;top:332px;width:246px;height:1px;background:#cccccc;"></div>
<div style="position:absolute;left:1638.60px;top:338.44px;font-size:23.7px;line-height:23.7px;color:#7f8c8d;font-weight:bold;white-space:nowrap;">62.9 °F</div>
<div style="position:absolute;left:1641.20px;top:364.43px;font-size:17.8px;line-height:17.8px;color:#565d60;font-weight:normal;white-space:nowrap;">TEROS 12 - Soil</div>
<div style="position:absolute;left:1641.20px;top:389.63px;font-size:17.8px;line-height:17.8px;color:#565d60;font-weight:normal;white-space:nowrap;">Temperature - 61 cm</div>
<div style="position:absolute;left:1638.60px;top:422.44px;font-size:23.7px;line-height:23.7px;color:#d35400;font-weight:bold;white-space:nowrap;">63.3 °F</div>
<div style="position:absolute;left:1641.20px;top:448.43px;font-size:17.8px;line-height:17.8px;color:#565d60;font-weight:normal;white-space:nowrap;">TEROS 12 - Soil</div>
<div style="position:absolute;left:1641.20px;top:473.63px;font-size:17.8px;line-height:17.8px;color:#565d60;font-weight:normal;white-space:nowrap;">Temperature - 36 cm</div>
<div style="position:absolute;left:1638.60px;top:506.44px;font-size:23.7px;line-height:23.7px;color:#f1c40f;font-weight:bold;white-space:nowrap;">63.7 °F</div>
<div style="position:absolute;left:1641.20px;top:532.43px;font-size:17.8px;line-height:17.8px;color:#565d60;font-weight:normal;white-space:nowrap;">TEROS 12 - Soil</div>
<div style="position:absolute;left:1641.20px;top:557.63px;font-size:17.8px;line-height:17.8px;color:#565d60;font-weight:normal;white-space:nowrap;">Temperature - 10 cm</div>
<div style="position:absolute;left:1638.60px;top:590.44px;font-size:23.7px;line-height:23.7px;color:#2ecc71;font-weight:bold;white-space:nowrap;">67.2 °F</div>
<div style="position:absolute;left:1641.20px;top:616.43px;font-size:17.8px;line-height:17.8px;color:#565d60;font-weight:normal;white-space:nowrap;">06-02109 - Logger</div>
<div style="position:absolute;left:1641.20px;top:641.63px;font-size:17.8px;line-height:17.8px;color:#565d60;font-weight:normal;white-space:nowrap;">Temperature</div>
<div style="position:absolute;left:107px;top:1043px;width:1781px;height:60px;box-sizing:border-box;border:2px solid #c9c9c9;border-radius:4px;background:#f2f2f2;"></div>
<div style="position:absolute;left:132.5px;top:1064.8px;width:62px;height:40px;box-sizing:border-box;border:2px solid #cdcdcd;border-radius:3px;"></div>
<div style="position:absolute;left:280.30px;top:1073.01px;font-size:25.5px;line-height:25.5px;color:#545b5e;font-weight:normal;white-space:nowrap;">Report: ROW 6</div>
<div style="position:absolute;left:1731.5px;top:1058.3px;width:58px;height:40px;box-sizing:border-box;border:2px solid #cdcdcd;border-radius:3px;background:#eeeeee;"></div>
<div style="position:absolute;left:1805.5px;top:1058.3px;width:57px;height:40px;box-sizing:border-box;border:2px solid #cdcdcd;border-radius:3px;background:#eeeeee;"></div>
<svg style="position:absolute;left:1740px;top:1062px" width="45" height="18" viewBox="1740 1062 45 18"><path d="M1758.5,1090 V1072.5 Q1758.5,1069 1762,1069 Q1765.8,1069 1765.8,1072.5 V1090 Z" fill="#4f575a"/><path d="M1769.5,1090 V1080.5 Q1769.5,1077 1773.2,1077 Q1777,1077 1777,1080.5 V1090 Z" fill="#4f575a"/></svg>
<svg style="position:absolute;left:1815px;top:1065.3px" width="40" height="38" viewBox="1815 1065.3 40 38"><g transform="translate(0 882.3)"><rect x="1829.4" y="188.6" width="1.9" height="12.6" rx="0.9" fill="#4f575a"/><rect x="1838" y="188.6" width="1.9" height="12.6" rx="0.9" fill="#4f575a"/><line x1="1830.35" y1="200.6" x2="1827.1" y2="206.6" stroke="#4f575a" stroke-width="1.9"/><line x1="1838.95" y1="200.6" x2="1842.2" y2="206.6" stroke="#4f575a" stroke-width="1.9"/><polygon points="1827.2,205.8 1842.1,205.8 1849,216.8 1820.4,216.8" fill="#4f575a"/><circle cx="1835.2" cy="203.3" r="2.8" fill="#4f575a"/><circle cx="1832.7" cy="197.1" r="1.9" fill="#4f575a"/><circle cx="1835.4" cy="191.4" r="1.5" fill="#4f575a"/></g></svg>
<div style="position:absolute;left:1830px;top:990px;width:75px;height:75px;border-radius:50%;background:#2a6496;box-shadow:0 1px 4px rgba(0,0,0,0.25);"></div>
<svg style="position:absolute;left:1845px;top:1003px" width="45" height="50" viewBox="1845 1003 45 50"><g transform="translate(-1.8 0)"><path d="M1857.8,1022.5 C1857.8,1015 1862.3,1011.8 1868.2,1011.8 C1874.6,1011.8 1878.8,1015.6 1878.8,1020.6 C1878.8,1025.4 1875.6,1027.4 1872.6,1029.4 C1870.2,1031 1869.6,1032 1869.6,1034.8" fill="none" stroke="#fff" stroke-width="7.2" stroke-linecap="round"/><circle cx="1869.2" cy="1044.5" r="4.1" fill="#fff"/></g></svg>
<div style="position:absolute;left:1913px;top:68px;width:7px;height:1012px;background:#f1f1f1;"></div>
<div style="position:absolute;left:1913px;top:939px;width:7px;height:141px;background:#d2d2d2;"></div>
<div style="position:absolute;left:1913px;top:68px;width:7px;height:871px;background:#7b7b7b;border-radius:0 0 4px 4px;"></div></body></html>
